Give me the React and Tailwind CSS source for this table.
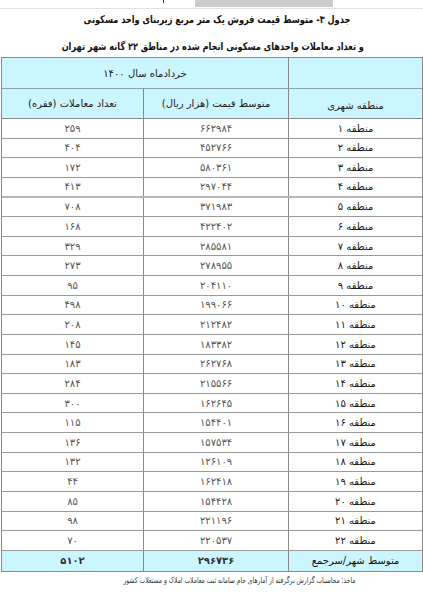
import React from "react";

const rows = [
  ["منطقه ۱", "۶۶۲۹۸۴", "۲۵۹"],
  ["منطقه ۲", "۴۵۲۷۶۶", "۴۰۴"],
  ["منطقه ۳", "۵۸۰۳۶۱", "۱۷۲"],
  ["منطقه ۴", "۲۹۷۰۴۴", "۴۱۳"],
  ["منطقه ۵", "۳۷۱۹۸۳", "۷۰۸"],
  ["منطقه ۶", "۴۲۲۴۰۲", "۱۶۸"],
  ["منطقه ۷", "۲۸۵۵۸۱", "۳۲۹"],
  ["منطقه ۸", "۲۷۸۹۵۵", "۲۷۳"],
  ["منطقه ۹", "۲۰۴۱۱۰", "۹۵"],
  ["منطقه ۱۰", "۱۹۹۰۶۶", "۴۹۸"],
  ["منطقه ۱۱", "۲۱۲۴۸۲", "۲۰۸"],
  ["منطقه ۱۲", "۱۸۳۳۸۲", "۱۴۵"],
  ["منطقه ۱۳", "۲۶۲۷۶۸", "۱۸۳"],
  ["منطقه ۱۴", "۲۱۵۵۶۶", "۲۸۴"],
  ["منطقه ۱۵", "۱۶۲۶۴۵", "۳۰۰"],
  ["منطقه ۱۶", "۱۵۴۴۰۱", "۱۱۵"],
  ["منطقه ۱۷", "۱۵۷۵۳۴", "۱۳۶"],
  ["منطقه ۱۸", "۱۲۶۱۰۹", "۱۳۲"],
  ["منطقه ۱۹", "۱۶۲۴۱۸", "۴۴"],
  ["منطقه ۲۰", "۱۵۴۴۲۸", "۸۵"],
  ["منطقه ۲۱", "۲۲۱۱۹۶", "۹۸"],
  ["منطقه ۲۲", "۲۲۰۵۳۷", "۷۰"],
];

export default function App() {
  return (
    <div
      className="w-[423px] h-[593px] bg-white overflow-hidden"
      style={{ fontFamily: '"DejaVu Sans", Tahoma, sans-serif' }}
    >
      {/* top strip */}
      <div className="h-[9px] border-b border-[#e0e0e0] flex items-start">
        <div className="w-[163px] shrink-0" />
        <div className="w-[1px] h-[3px] bg-[#333] shrink-0" />
        <div className="w-[31px] shrink-0" />
        <div className="w-[138px] h-[7px] bg-[#cccccc] shrink-0" />
      </div>

      <div dir="rtl" className="flex flex-col">
        <div className="h-[21px] flex items-center justify-center pt-[1px] pl-[10px]">
          <span className="whitespace-nowrap text-[10.5px] font-bold text-[#111] scale-x-[0.78]">
            جدول ۳- متوسط قیمت فروش یک متر مربع زیربنای واحد مسکونی
          </span>
        </div>
        <div className="h-[27px] flex items-end justify-center pb-[2px] pl-[2px]">
          <span className="whitespace-nowrap text-[10.5px] font-bold text-[#111] scale-x-[0.78]">
            و تعداد معاملات واحدهای مسکونی انجام شده در مناطق ۲۲ گانه شهر تهران
          </span>
        </div>

        <div className="w-[422px] border border-[#8a8a8a] text-[10px] text-[#222]">
          {/* header row 1 */}
          <div className="grid grid-cols-[134px_1fr] h-[31px] bg-[#ccf6ff] border-b border-[#8aa3aa]">
            <div className="border-l border-[#8a8a8a]" />
            <div className="flex items-center justify-center">خردادماه سال ۱۴۰۰</div>
          </div>
          {/* header row 2 */}
          <div className="grid grid-cols-[134px_145px_1fr] h-[30px] bg-[#ccf6ff] border-b border-[#8a8a8a]">
            <div className="border-l border-[#8a8a8a] flex items-center justify-center pt-[3px]">منطقه شهری</div>
            <div className="border-l border-[#8a8a8a] flex items-center justify-center">متوسط قیمت (هزار ریال)</div>
            <div className="flex items-center justify-center">تعداد معاملات (فقره)</div>
          </div>
          {rows.map((r, i) => (
            <div
              key={i}
              className={
                "grid grid-cols-[134px_145px_1fr] h-[19.64px] " +
                (i === 3 ? "border-b-2 border-[#b5b5b5]" : "border-b border-[#9a9a9a]")
              }
            >
              <div className="border-l border-[#8a8a8a] flex items-center justify-center text-[#1a1a1a]">{r[0]}</div>
              <div className="border-l border-[#8a8a8a] flex items-center justify-center text-[#555]">{r[1]}</div>
              <div className="flex items-center justify-center text-[#555]">{r[2]}</div>
            </div>
          ))}
          <div className="grid grid-cols-[134px_145px_1fr] h-[20px] bg-[#ccf6ff]">
            <div className="border-l border-[#8a8a8a] flex items-center justify-center text-[#111]">متوسط شهر/سرجمع</div>
            <div className="border-l border-[#8a8a8a] flex items-center justify-center font-bold text-[#333]">۲۹۶۷۳۶</div>
            <div className="flex items-center justify-center font-bold text-[#333]">۵۱۰۲</div>
          </div>
        </div>

        <div className="pr-[68px] pt-[3px] flex">
          <span className="inline-block whitespace-nowrap text-[8px] text-[#333] scale-x-[0.75] origin-right">
            ماخذ: محاسبات گزارش برگرفته از آمارهای خام سامانه ثبت معاملات املاک و مستغلات کشور
          </span>
        </div>
      </div>
    </div>
  );
}
